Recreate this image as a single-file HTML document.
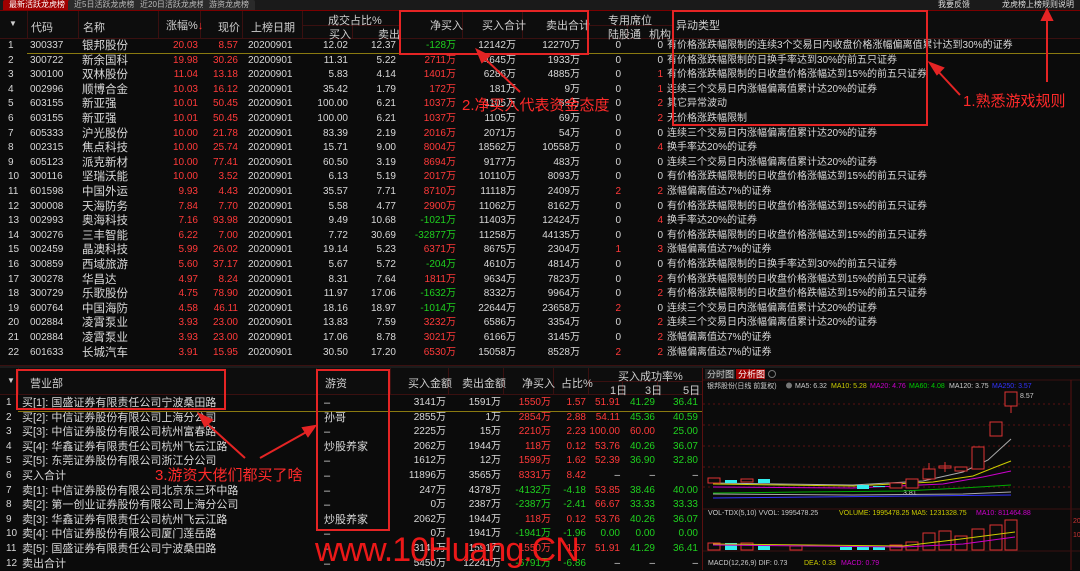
<!DOCTYPE html>
<html><head><meta charset="utf-8"><style>
*{margin:0;padding:0;box-sizing:border-box}
body{width:1080px;height:570px;background:#0b0b0b;overflow:hidden;position:relative;font-family:"Liberation Sans","Noto Sans CJK SC",sans-serif;font-size:10px;color:#d8d8d8}
.abs{position:absolute}
.tabs{left:0;top:0;width:1080px;height:11px;background:#1a1a1a;border-bottom:1px solid #7a0000}
.tab{position:absolute;top:0;height:10px;font-size:8px;line-height:10px;color:#bbb;background:#2a2a2a;padding:0 6px;border-radius:2px 2px 0 0}
.tab.on{background:#a00000;color:#fff}
.row{position:absolute;left:0;height:14.6px;line-height:14.6px;white-space:nowrap;display:flex}
.row span{display:block;overflow:visible}
.red{color:#ff3a3a}.grn{color:#1fd01f}
.hd{position:absolute;color:#cfcfcf;font-size:11px}
.vl{position:absolute;width:1px;background:#3a1010}
.box{position:absolute;border:2px solid #e52424}
.ann{position:absolute;color:#ff2a2a;font-size:15px;white-space:nowrap}
.t span:nth-child(1){width:27px;padding-left:8px}
.t span:nth-child(2){width:51px;padding-left:3px}
.t span:nth-child(3){width:80px;padding-left:4px;font-size:11.5px}
.t span:nth-child(4){width:40px;text-align:right;color:#ff3a3a}
.t span:nth-child(5){width:40px;text-align:right;color:#ff3a3a}
.t span:nth-child(6){width:62px;padding-left:10px}
.t span:nth-child(7){width:48px;text-align:right}
.t span:nth-child(8){width:48px;text-align:right}
.t span:nth-child(9){width:60px;text-align:right}
.t span:nth-child(10){width:60px;text-align:right}
.t span:nth-child(11){width:64px;text-align:right}
.t span:nth-child(12){width:41px;text-align:right}
.t span:nth-child(13){width:42px;text-align:right}
.t span:nth-child(14){padding-left:4px;font-size:10px}
.b span:nth-child(1){width:22px;padding-left:6px}
.b span:nth-child(2){width:302px;font-size:11px}
.b span:nth-child(3){width:66px;font-size:11px}
.b span:nth-child(4){width:56px;text-align:right}
.b span:nth-child(5){width:55px;text-align:right}
.b span:nth-child(6){width:50px;text-align:right}
.b span:nth-child(7){width:35px;text-align:right}
.b span:nth-child(8){width:34px;text-align:right}
.b span:nth-child(9){width:35px;text-align:right}
.b span:nth-child(10){width:43px;text-align:right}
</style></head><body>
<div class="abs tabs">
<div class="tab on" style="left:3px">最新活跃龙虎榜</div>
<div class="tab" style="left:68px">近5日活跃龙虎榜</div>
<div class="tab" style="left:134px">近20日活跃龙虎榜</div>
<div class="tab" style="left:203px">游资龙虎榜</div>
<div class="abs" style="right:110px;top:0;font-size:8px;line-height:10px;color:#ddd">我要反馈</div>
<div class="abs" style="right:6px;top:0;font-size:8px;line-height:10px;color:#ddd">龙虎榜上榜规则说明</div>
</div>
<div class="abs" style="left:0;top:11px;width:1080px;height:28px;background:#0d0d0d;border-bottom:1px solid #3a1010"></div>
<div class="vl" style="left:27px;top:11px;height:28px"></div><div class="vl" style="left:78px;top:11px;height:28px"></div><div class="vl" style="left:158px;top:11px;height:28px"></div><div class="vl" style="left:200px;top:11px;height:28px"></div><div class="vl" style="left:242px;top:11px;height:28px"></div><div class="vl" style="left:302px;top:11px;height:28px"></div><div class="vl" style="left:352px;top:25px;height:14px"></div><div class="vl" style="left:400px;top:11px;height:28px"></div><div class="vl" style="left:462px;top:11px;height:28px"></div><div class="vl" style="left:522px;top:11px;height:28px"></div><div class="vl" style="left:587px;top:11px;height:28px"></div><div class="vl" style="left:627px;top:25px;height:14px"></div><div class="vl" style="left:672px;top:11px;height:28px"></div>
<div class="abs" style="left:302px;top:25px;width:98px;height:1px;background:#3a1010"></div>
<div class="abs" style="left:587px;top:25px;width:85px;height:1px;background:#3a1010"></div>
<div class="hd" style="left:9px;top:19px;font-size:8px">▼</div>
<div class="hd" style="left:31px;top:19px">代码</div>
<div class="hd" style="left:83px;top:19px">名称</div>
<div class="hd" style="left:166px;top:17px">涨幅%<span style="color:#f33">↓</span></div>
<div class="hd" style="left:218px;top:19px">现价</div>
<div class="hd" style="left:251px;top:19px">上榜日期</div>
<div class="hd" style="left:328px;top:12px">成交占比%</div>
<div class="hd" style="left:329px;top:26px">买入</div>
<div class="hd" style="left:378px;top:26px">卖出</div>
<div class="hd" style="left:430px;top:17px">净买入</div>
<div class="hd" style="left:482px;top:17px">买入合计</div>
<div class="hd" style="left:546px;top:17px">卖出合计</div>
<div class="hd" style="left:608px;top:12px">专用席位</div>
<div class="hd" style="left:608px;top:26px">陆股通</div>
<div class="hd" style="left:649px;top:26px">机构</div>
<div class="hd" style="left:676px;top:17px">异动类型</div>
<div class="abs" style="left:27px;top:53px;width:1053px;height:1px;background:#8a7a10"></div>
<div style="position:absolute;left:0;top:39px">
<div class="row t" style="top:0"><span>1</span><span>300337</span><span>银邦股份</span><span>20.03</span><span>8.57</span><span>20200901</span><span>12.02</span><span>12.37</span><span class="grn">-128万</span><span>12142万</span><span>12270万</span><span>0</span><span>0</span><span>有价格涨跌幅限制的连续3个交易日内收盘价格涨幅偏离值累计达到30%的证券</span></div>
<div class="row t" style="top:14.6px"><span>2</span><span>300722</span><span>新余国科</span><span>19.98</span><span>30.26</span><span>20200901</span><span>11.31</span><span>5.22</span><span class="red">2711万</span><span>4645万</span><span>1933万</span><span>0</span><span>0</span><span>有价格涨跌幅限制的日换手率达到30%的前五只证券</span></div>
<div class="row t" style="top:29.2px"><span>3</span><span>300100</span><span>双林股份</span><span>11.04</span><span>13.18</span><span>20200901</span><span>5.83</span><span>4.14</span><span class="red">1401万</span><span>6286万</span><span>4885万</span><span>0</span><span class="red">1</span><span>有价格涨跌幅限制的日收盘价格涨幅达到15%的前五只证券</span></div>
<div class="row t" style="top:43.8px"><span>4</span><span>002996</span><span>顺博合金</span><span>10.03</span><span>16.12</span><span>20200901</span><span>35.42</span><span>1.79</span><span class="red">172万</span><span>181万</span><span>9万</span><span>0</span><span class="red">1</span><span>连续三个交易日内涨幅偏离值累计达20%的证券</span></div>
<div class="row t" style="top:58.4px"><span>5</span><span>603155</span><span>新亚强</span><span>10.01</span><span>50.45</span><span>20200901</span><span>100.00</span><span>6.21</span><span class="red">1037万</span><span>1105万</span><span>69万</span><span>0</span><span class="red">2</span><span>其它异常波动</span></div>
<div class="row t" style="top:73px"><span>6</span><span>603155</span><span>新亚强</span><span>10.01</span><span>50.45</span><span>20200901</span><span>100.00</span><span>6.21</span><span class="red">1037万</span><span>1105万</span><span>69万</span><span>0</span><span class="red">2</span><span>无价格涨跌幅限制</span></div>
<div class="row t" style="top:87.6px"><span>7</span><span>605333</span><span>沪光股份</span><span>10.00</span><span>21.78</span><span>20200901</span><span>83.39</span><span>2.19</span><span class="red">2016万</span><span>2071万</span><span>54万</span><span>0</span><span>0</span><span>连续三个交易日内涨幅偏离值累计达20%的证券</span></div>
<div class="row t" style="top:102.2px"><span>8</span><span>002315</span><span>焦点科技</span><span>10.00</span><span>25.74</span><span>20200901</span><span>15.71</span><span>9.00</span><span class="red">8004万</span><span>18562万</span><span>10558万</span><span>0</span><span class="red">4</span><span>换手率达20%的证券</span></div>
<div class="row t" style="top:116.8px"><span>9</span><span>605123</span><span>派克新材</span><span>10.00</span><span>77.41</span><span>20200901</span><span>60.50</span><span>3.19</span><span class="red">8694万</span><span>9177万</span><span>483万</span><span>0</span><span>0</span><span>连续三个交易日内涨幅偏离值累计达20%的证券</span></div>
<div class="row t" style="top:131.4px"><span>10</span><span>300116</span><span>坚瑞沃能</span><span>10.00</span><span>3.52</span><span>20200901</span><span>6.13</span><span>5.19</span><span class="red">2017万</span><span>10110万</span><span>8093万</span><span>0</span><span>0</span><span>有价格涨跌幅限制的日收盘价格涨幅达到15%的前五只证券</span></div>
<div class="row t" style="top:146px"><span>11</span><span>601598</span><span>中国外运</span><span>9.93</span><span>4.43</span><span>20200901</span><span>35.57</span><span>7.71</span><span class="red">8710万</span><span>11118万</span><span>2409万</span><span class="red">2</span><span class="red">2</span><span>涨幅偏离值达7%的证券</span></div>
<div class="row t" style="top:160.6px"><span>12</span><span>300008</span><span>天海防务</span><span>7.84</span><span>7.70</span><span>20200901</span><span>5.58</span><span>4.77</span><span class="red">2900万</span><span>11062万</span><span>8162万</span><span>0</span><span>0</span><span>有价格涨跌幅限制的日收盘价格涨幅达到15%的前五只证券</span></div>
<div class="row t" style="top:175.2px"><span>13</span><span>002993</span><span>奥海科技</span><span>7.16</span><span>93.98</span><span>20200901</span><span>9.49</span><span>10.68</span><span class="grn">-1021万</span><span>11403万</span><span>12424万</span><span>0</span><span class="red">4</span><span>换手率达20%的证券</span></div>
<div class="row t" style="top:189.8px"><span>14</span><span>300276</span><span>三丰智能</span><span>6.22</span><span>7.00</span><span>20200901</span><span>7.72</span><span>30.69</span><span class="grn">-32877万</span><span>11258万</span><span>44135万</span><span>0</span><span>0</span><span>有价格涨跌幅限制的日收盘价格涨幅达到15%的前五只证券</span></div>
<div class="row t" style="top:204.4px"><span>15</span><span>002459</span><span>晶澳科技</span><span>5.99</span><span>26.02</span><span>20200901</span><span>19.14</span><span>5.23</span><span class="red">6371万</span><span>8675万</span><span>2304万</span><span class="red">1</span><span class="red">3</span><span>涨幅偏离值达7%的证券</span></div>
<div class="row t" style="top:219px"><span>16</span><span>300859</span><span>西域旅游</span><span>5.60</span><span>37.17</span><span>20200901</span><span>5.67</span><span>5.72</span><span class="grn">-204万</span><span>4610万</span><span>4814万</span><span>0</span><span>0</span><span>有价格涨跌幅限制的日换手率达到30%的前五只证券</span></div>
<div class="row t" style="top:233.6px"><span>17</span><span>300278</span><span>华昌达</span><span>4.97</span><span>8.24</span><span>20200901</span><span>8.31</span><span>7.64</span><span class="red">1811万</span><span>9634万</span><span>7823万</span><span>0</span><span class="red">2</span><span>有价格涨跌幅限制的日收盘价格涨幅达到15%的前五只证券</span></div>
<div class="row t" style="top:248.2px"><span>18</span><span>300729</span><span>乐歌股份</span><span>4.75</span><span>78.90</span><span>20200901</span><span>11.97</span><span>17.06</span><span class="grn">-1632万</span><span>8332万</span><span>9964万</span><span>0</span><span class="red">2</span><span>有价格涨跌幅限制的日收盘价格跌幅达到15%的前五只证券</span></div>
<div class="row t" style="top:262.8px"><span>19</span><span>600764</span><span>中国海防</span><span>4.58</span><span>46.11</span><span>20200901</span><span>18.16</span><span>18.97</span><span class="grn">-1014万</span><span>22644万</span><span>23658万</span><span class="red">2</span><span>0</span><span>连续三个交易日内涨幅偏离值累计达20%的证券</span></div>
<div class="row t" style="top:277.4px"><span>20</span><span>002884</span><span>凌霄泵业</span><span>3.93</span><span>23.00</span><span>20200901</span><span>13.83</span><span>7.59</span><span class="red">3232万</span><span>6586万</span><span>3354万</span><span>0</span><span class="red">2</span><span>连续三个交易日内涨幅偏离值累计达20%的证券</span></div>
<div class="row t" style="top:292px"><span>21</span><span>002884</span><span>凌霄泵业</span><span>3.93</span><span>23.00</span><span>20200901</span><span>17.06</span><span>8.78</span><span class="red">3021万</span><span>6166万</span><span>3145万</span><span>0</span><span class="red">2</span><span>涨幅偏离值达7%的证券</span></div>
<div class="row t" style="top:306.6px"><span>22</span><span>601633</span><span>长城汽车</span><span>3.91</span><span>15.95</span><span>20200901</span><span>30.50</span><span>17.20</span><span class="red">6530万</span><span>15058万</span><span>8528万</span><span class="red">2</span><span class="red">2</span><span>涨幅偏离值达7%的证券</span></div>
</div>
<div class="abs" style="left:0;top:365px;width:1080px;height:3px;background:#1c1c1c;border-top:1px solid #3a1010"></div>
<div class="abs" style="left:0;top:368px;width:703px;height:27px;background:#0d0d0d;border-bottom:1px solid #3a1010"></div>
<div class="vl" style="left:18px;top:368px;height:27px"></div><div class="vl" style="left:316px;top:368px;height:27px"></div><div class="vl" style="left:390px;top:368px;height:27px"></div><div class="vl" style="left:448px;top:368px;height:27px"></div><div class="vl" style="left:503px;top:368px;height:27px"></div><div class="vl" style="left:553px;top:368px;height:27px"></div><div class="vl" style="left:588px;top:368px;height:27px"></div><div class="vl" style="left:622px;top:382px;height:13px"></div><div class="vl" style="left:657px;top:382px;height:13px"></div><div class="vl" style="left:702px;top:368px;height:202px;background:#5a1010"></div>
<div class="abs" style="left:588px;top:381px;width:114px;height:1px;background:#3a1010"></div>
<div class="hd" style="left:7px;top:376px;font-size:8px">▼</div>
<div class="hd" style="left:30px;top:375px">营业部</div>
<div class="hd" style="left:325px;top:375px">游资</div>
<div class="hd" style="left:408px;top:375px">买入金额</div>
<div class="hd" style="left:462px;top:375px">卖出金额</div>
<div class="hd" style="left:522px;top:375px">净买入</div>
<div class="hd" style="left:561px;top:375px">占比%</div>
<div class="hd" style="left:618px;top:368px">买入成功率%</div>
<div class="hd" style="left:610px;top:382px">1日</div>
<div class="hd" style="left:645px;top:382px">3日</div>
<div class="hd" style="left:683px;top:382px">5日</div>
<div class="abs" style="left:18px;top:411px;width:684px;height:1px;background:#8a7a10"></div>
<div style="position:absolute;left:0;top:396px">
<div class="row b" style="top:0"><span>1</span><span>买[1]: 国盛证券有限责任公司宁波桑田路</span><span>–</span><span>3141万</span><span>1591万</span><span class="red">1550万</span><span class="red">1.57</span><span class="red">51.91</span><span class="grn">41.29</span><span class="grn">36.41</span></div>
<div class="row b" style="top:14.6px"><span>2</span><span>买[2]: 中信证券股份有限公司上海分公司</span><span>孙哥</span><span>2855万</span><span>1万</span><span class="red">2854万</span><span class="red">2.88</span><span class="red">54.11</span><span class="grn">45.36</span><span class="grn">40.59</span></div>
<div class="row b" style="top:29.2px"><span>3</span><span>买[3]: 中信证券股份有限公司杭州富春路</span><span>–</span><span>2225万</span><span>15万</span><span class="red">2210万</span><span class="red">2.23</span><span class="red">100.00</span><span class="red">60.00</span><span class="grn">25.00</span></div>
<div class="row b" style="top:43.8px"><span>4</span><span>买[4]: 华鑫证券有限责任公司杭州飞云江路</span><span>炒股养家</span><span>2062万</span><span>1944万</span><span class="red">118万</span><span class="red">0.12</span><span class="red">53.76</span><span class="grn">40.26</span><span class="grn">36.07</span></div>
<div class="row b" style="top:58.4px"><span>5</span><span>买[5]: 东莞证券股份有限公司浙江分公司</span><span>–</span><span>1612万</span><span>12万</span><span class="red">1599万</span><span class="red">1.62</span><span class="red">52.39</span><span class="grn">36.90</span><span class="grn">32.80</span></div>
<div class="row b" style="top:73px"><span>6</span><span>买入合计</span><span>–</span><span>11896万</span><span>3565万</span><span class="red">8331万</span><span class="red">8.42</span><span>–</span><span>–</span><span>–</span></div>
<div class="row b" style="top:87.6px"><span>7</span><span>卖[1]: 中信证券股份有限公司北京东三环中路</span><span>–</span><span>247万</span><span>4378万</span><span class="grn">-4132万</span><span class="grn">-4.18</span><span class="red">53.85</span><span class="grn">38.46</span><span class="grn">40.00</span></div>
<div class="row b" style="top:102.2px"><span>8</span><span>卖[2]: 第一创业证券股份有限公司上海分公司</span><span>–</span><span>0万</span><span>2387万</span><span class="grn">-2387万</span><span class="grn">-2.41</span><span class="red">66.67</span><span class="grn">33.33</span><span class="grn">33.33</span></div>
<div class="row b" style="top:116.8px"><span>9</span><span>卖[3]: 华鑫证券有限责任公司杭州飞云江路</span><span>炒股养家</span><span>2062万</span><span>1944万</span><span class="red">118万</span><span class="red">0.12</span><span class="red">53.76</span><span class="grn">40.26</span><span class="grn">36.07</span></div>
<div class="row b" style="top:131.4px"><span>10</span><span>卖[4]: 中信证券股份有限公司厦门莲岳路</span><span>–</span><span>0万</span><span>1941万</span><span class="grn">-1941万</span><span class="grn">-1.96</span><span class="grn">0.00</span><span class="grn">0.00</span><span class="grn">0.00</span></div>
<div class="row b" style="top:146px"><span>11</span><span>卖[5]: 国盛证券有限责任公司宁波桑田路</span><span>–</span><span>3141万</span><span>1591万</span><span class="red">1550万</span><span class="red">1.57</span><span class="red">51.91</span><span class="grn">41.29</span><span class="grn">36.41</span></div>
<div class="row b" style="top:160.6px"><span>12</span><span>卖出合计</span><span>–</span><span>5450万</span><span>12241万</span><span class="grn">-6791万</span><span class="grn">-6.86</span><span>–</span><span>–</span><span>–</span></div>
</div>
<svg class="abs" style="left:703px;top:368px" width="377" height="202" viewBox="0 0 377 202">
<rect x="0" y="0" width="377" height="202" fill="#0b0b0b"/>
<rect x="2" y="1" width="30" height="10" fill="#222"/><text x="4" y="9.5" fill="#ccc" font-size="9" font-family="Liberation Sans,Noto Sans CJK SC,sans-serif">分时图</text>
<rect x="33" y="1" width="29" height="10" fill="#a00000"/><text x="35" y="9.5" fill="#fff" font-size="9" font-family="Liberation Sans,Noto Sans CJK SC,sans-serif">分析图</text>
<circle cx="69" cy="6" r="3.5" fill="none" stroke="#777"/>
<line x1="0" y1="12" x2="377" y2="12" stroke="#3a1010"/>
<line x1="368" y1="12" x2="368" y2="202" stroke="#5a1010"/>
<g font-size="7" font-family="Liberation Sans,Noto Sans CJK SC,sans-serif">
<text x="4" y="20" fill="#ccc">银邦股份(日线 前复权)</text><circle cx="86" cy="17.5" r="3" fill="#777"/>
<text x="92" y="20" fill="#ccc">MA5: 6.32</text><text x="128" y="20" fill="#cc0">MA10: 5.28</text><text x="167" y="20" fill="#c0c">MA20: 4.76</text><text x="206" y="20" fill="#0c0">MA60: 4.08</text><text x="246" y="20" fill="#ccc">MA120: 3.75</text><text x="289" y="20" fill="#33f">MA250: 3.57</text>
<text x="317" y="30" fill="#ccc">8.57</text>
<text x="200" y="127" fill="#ccc">3.81</text>
<text x="5" y="147" fill="#ccc">VOL-TDX(5,10) VVOL: 1995478.25</text><text x="136" y="147" fill="#cc0">VOLUME: 1995478.25 MA5: 1231328.75</text><text x="273" y="147" fill="#c0c">MA10: 811464.88</text>
<text x="5" y="197" fill="#ccc">MACD(12,26,9) DIF: 0.73</text><text x="101" y="197" fill="#cc0">DEA: 0.33</text><text x="138" y="197" fill="#c0c">MACD: 0.79</text>
<text x="370" y="155" fill="#c33">20</text><text x="370" y="169" fill="#c33">10</text>
</g>
<g stroke="#5a1010" stroke-dasharray="2,3"><line x1="0" y1="36" x2="368" y2="36"/><line x1="0" y1="57" x2="368" y2="57"/><line x1="0" y1="78" x2="368" y2="78"/><line x1="0" y1="99" x2="368" y2="99"/><line x1="0" y1="119" x2="368" y2="119"/></g>
<line x1="0" y1="141" x2="377" y2="141" stroke="#3a1010"/><line x1="0" y1="183" x2="377" y2="183" stroke="#3a1010"/>
<polyline fill="none" stroke="#aaa" points="10,115 150,117 220,113 260,104 285,92 308,71"/>
<polyline fill="none" stroke="#cc0" points="10,116 150,118 230,114 270,108 295,98 308,93"/>
<polyline fill="none" stroke="#c0c" points="10,119 150,120 240,116 280,109 308,103"/>
<polyline fill="none" stroke="#0a0" points="10,125 100,124 200,123 260,120 308,117"/>
<polyline fill="none" stroke="#aaa" points="10,126 150,127 260,126 308,124"/>
<polyline fill="none" stroke="#33f" points="10,130 308,127"/>
<g fill="#0b0b0b" stroke="#d33">
<rect x="5" y="110" width="12" height="5"/><rect x="38" y="111" width="12" height="3"/><rect x="187" y="115" width="12" height="5"/><rect x="203" y="111" width="12" height="9"/><rect x="220" y="101" width="12" height="10"/><rect x="236" y="98" width="12" height="2"/><rect x="252" y="99" width="12" height="4"/><rect x="269" y="79" width="12" height="22"/><rect x="287" y="54" width="12" height="14"/><rect x="302" y="24" width="12" height="14"/>
<line x1="308" y1="38" x2="308" y2="45"/><line x1="226" y1="95" x2="226" y2="101"/><line x1="242" y1="94" x2="242" y2="104"/>
</g>
<g fill="#3ee"><rect x="22" y="112" width="12" height="3"/><rect x="55" y="111" width="12" height="4"/><rect x="154" y="117" width="12" height="4"/><rect x="170" y="118" width="12" height="1"/></g>
<g fill="none" stroke="#d33">
<rect x="5" y="175" width="12" height="7"/><rect x="38" y="175" width="12" height="7"/><rect x="87" y="178" width="12" height="4"/><rect x="187" y="177" width="12" height="5"/><rect x="203" y="174" width="12" height="8"/><rect x="220" y="165" width="12" height="17"/><rect x="236" y="163" width="12" height="19"/><rect x="252" y="168" width="12" height="14"/><rect x="269" y="161" width="12" height="21"/><rect x="287" y="157" width="12" height="25"/><rect x="302" y="152" width="12" height="30"/>
</g>
<g fill="#3ee"><rect x="22" y="175" width="12" height="7"/><rect x="55" y="176" width="12" height="6"/><rect x="137" y="179" width="12" height="3"/><rect x="154" y="178" width="12" height="4"/><rect x="170" y="179" width="12" height="3"/></g>
<polyline fill="none" stroke="#cc0" points="10,176 200,178 250,172 312,164"/>
<polyline fill="none" stroke="#c0c" points="10,177 200,179 260,176 312,169"/>
</svg>
<div class="box" style="left:399px;top:10px;width:190px;height:45px"></div>
<div class="box" style="left:672px;top:10px;width:256px;height:116px"></div>
<div class="box" style="left:16px;top:369px;width:210px;height:41px"></div>
<div class="box" style="left:316px;top:369px;width:74px;height:162px"></div>
<div class="ann" style="left:462px;top:94px">2.净买入代表资金态度</div>
<div class="ann" style="left:963px;top:90px">1.熟悉游戏规则</div>
<div class="ann" style="left:155px;top:464px">3.游资大佬们都买了啥</div>
<svg class="abs" style="left:0;top:0" width="1080" height="570">
<g stroke="#e52424" stroke-width="2" fill="#e52424">
<line x1="520" y1="92" x2="480" y2="54"/><polygon points="477,50 489,56 482,62"/>
<line x1="960" y1="95" x2="935" y2="68"/><polygon points="930,63 943,68 937,74"/>
<line x1="1047" y1="82" x2="1047" y2="16"/><polygon points="1047,10 1042,20 1052,20"/>
<line x1="245" y1="458" x2="203" y2="420"/><polygon points="199,414 212,420 205,426"/>
<line x1="260" y1="458" x2="310" y2="430"/><polygon points="315,426 303,428 308,436"/>
</g></svg>
<div class="abs" style="left:315px;top:530px;color:#ff1a1a;font-size:34px;line-height:40px;letter-spacing:-1px;white-space:nowrap;opacity:.92">www.10Huang.CN</div>
</body></html>
